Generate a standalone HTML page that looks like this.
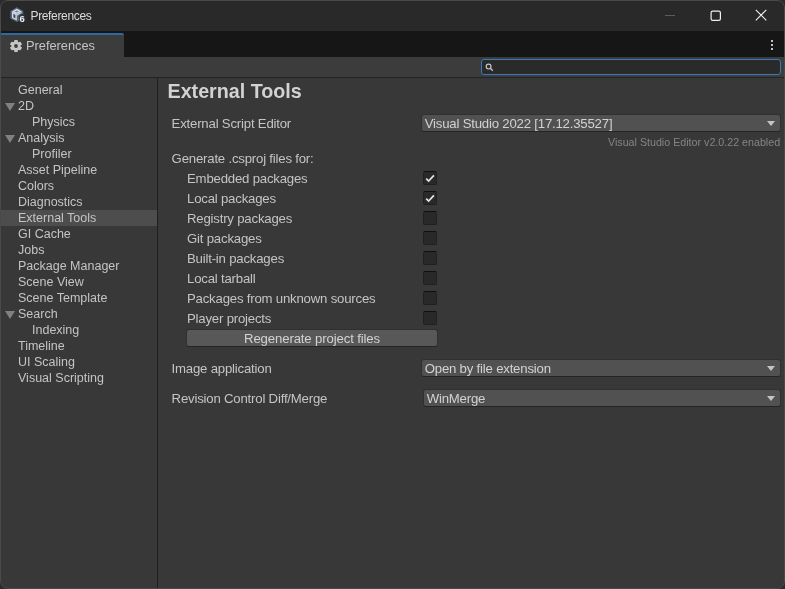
<!DOCTYPE html>
<html><head><meta charset="utf-8">
<style>
*{margin:0;padding:0;box-sizing:border-box}
html,body{width:785px;height:589px;overflow:hidden;background:#2c2c2c;font-family:"Liberation Sans",sans-serif;}
.win{will-change:transform;position:absolute;left:0;top:0;width:785px;height:589px;border:1px solid #4a4a4a;border-radius:8px;background:#383838;overflow:hidden}
.abs{position:absolute}
.title{left:0;top:0;width:783px;height:30px;background:#292929}
.tabbar{left:0;top:30px;width:783px;height:26px;background:#161616}
.tab{left:0;top:32px;width:123px;height:24px;background:#3c3c3c;border-top:2px solid #2e69a2;border-top-right-radius:2px}
.toolbar{left:0;top:56px;width:783px;height:20px;background:#3c3c3c}
.tsep{left:0;top:76px;width:783px;height:1px;background:#232323}
.vsep{left:156px;top:77px;width:1px;height:511px;background:#1f1f1f}
.t{position:absolute;white-space:pre;color:#c4c4c4;font-size:12.7px;line-height:16px}
.rt{font-size:13.2px;letter-spacing:-0.2px}
.lt{font-size:12.5px}
.sel{left:0;top:209px;width:156px;height:16px;background:#4d4d4d}
.tri{position:absolute;width:0;height:0;border-left:5px solid transparent;border-right:5px solid transparent;border-top:8px solid #808080}
.dd{position:absolute;height:18px;background:#515151;border-radius:3px;border:1px solid #303030;border-bottom-color:#242424}
.dd .arr{position:absolute;right:5px;top:6px;width:0;height:0;border-left:4.2px solid transparent;border-right:4.2px solid transparent;border-top:5.2px solid #c4c4c4}
.dd .t{left:2.7px;top:0.5px;color:#d2d2d2}
.cb{position:absolute;left:422px;width:14px;height:14px;background:#292929;border:1px solid #202020;border-top-color:#101010;border-radius:2px}
.cb svg{position:absolute;left:-1px;top:-1px}
.btn{position:absolute;left:185px;top:328px;width:252px;height:18px;background:#585858;border-radius:3px;border:1px solid #303030;border-bottom-color:#242424}
</style></head><body>
<div class="win">
  <div class="abs title"></div>
  <svg class="abs" style="left:9px;top:6px" width="17" height="17" viewBox="0 0 17 17">
    <path d="M6.8 0.2 L13.3 3.9 L13.3 11.4 L6.8 15.1 L0.4 11.4 L0.4 3.9 Z" fill="#5a697a"/>
    <path d="M6.8 1.7 L11.6 4.4 L6.8 7.1 L2 4.4 Z" fill="#d6e0ea"/>
    <path d="M6.8 3.4 L9.1 4.4 L6.8 5.5 L4.5 4.4 Z" fill="#6f7f90"/>
    <path d="M2 4.4 L6.8 7.1 L6.8 13.6 L2 10.9 Z" fill="#d0dae6"/>
    <path d="M3.4 6.7 L5.4 7.9 L5.4 11.4 L3.4 10.2 Z" fill="#3c4653"/>
    <path d="M6.8 7.1 L11.6 4.4 L11.6 6 L6.8 8.7 Z" fill="#c0ccd8"/>
    <ellipse cx="12.2" cy="11.2" rx="3.3" ry="4.3" fill="#2e3640"/>
    <text x="12.2" y="14.8" font-size="9.4" text-anchor="middle" fill="#eeeeee" font-family="Liberation Sans" font-weight="bold">6</text>
  </svg>
  <div class="t" style="left:29.5px;top:6.5px;color:#dcdcdc;font-size:12px;letter-spacing:-0.35px">Preferences</div>
  <div class="abs" style="left:663.5px;top:14px;width:10.5px;height:1px;background:#5c5c5c"></div>
  <svg class="abs" style="left:708.5px;top:8.5px" width="12" height="12" viewBox="0 0 12 12"><rect x="1.1" y="1.1" width="9.3" height="9.3" rx="1.6" fill="none" stroke="#f0f0f0" stroke-width="1.2"/></svg>
  <svg class="abs" style="left:754.3px;top:8.3px" width="13" height="13" viewBox="0 0 13 13"><path d="M0.8 0.8 L11.3 11.3 M11.3 0.8 L0.8 11.3" stroke="#f0f0f0" stroke-width="1.1"/></svg>
  <div class="abs tabbar"></div>
  <div class="abs tab"></div>
  <svg class="abs" style="left:9px;top:39px" width="13" height="13" viewBox="0 0 13 13"><g transform="translate(6 6)" fill="#c6c6c6">
    <circle r="4.5"/><rect x="-1.8" y="-6.1" width="3.6" height="3.2" rx="0.9" transform="rotate(0)"/><rect x="-1.8" y="-6.1" width="3.6" height="3.2" rx="0.9" transform="rotate(60)"/><rect x="-1.8" y="-6.1" width="3.6" height="3.2" rx="0.9" transform="rotate(120)"/><rect x="-1.8" y="-6.1" width="3.6" height="3.2" rx="0.9" transform="rotate(180)"/><rect x="-1.8" y="-6.1" width="3.6" height="3.2" rx="0.9" transform="rotate(240)"/><rect x="-1.8" y="-6.1" width="3.6" height="3.2" rx="0.9" transform="rotate(300)"/>
    <circle r="1.9" fill="#3c3c3c"/></g></svg>
  <div class="t" style="left:25px;top:37px;font-size:12.8px">Preferences</div>
  <div class="abs" style="left:770px;top:39px;width:2px;height:2px;background:#c4c4c4"></div>
  <div class="abs" style="left:770px;top:43px;width:2px;height:2px;background:#c4c4c4"></div>
  <div class="abs" style="left:770px;top:46.5px;width:2px;height:2px;background:#c4c4c4"></div>
  <div class="abs toolbar"></div>
  <div class="abs" style="left:480px;top:58px;width:300px;height:16px;background:#2a2a2a;border:1px solid #3a79bb;border-radius:3px"></div>
  <svg class="abs" style="left:484px;top:62.3px" width="9" height="9" viewBox="0 0 9 9"><circle cx="3.6" cy="3.6" r="2.4" fill="none" stroke="#c4c4c4" stroke-width="1.2"/><path d="M5.3 5.3 L7.8 7.8" stroke="#c4c4c4" stroke-width="1.3"/></svg>
  <div class="abs tsep"></div>
  <div class="abs sel"></div>
<div class="t lt" style="left:17px;top:81px">General</div>
<div class="t lt" style="left:17px;top:97px">2D</div>
<div class="tri" style="left:3.7px;top:102px"></div>
<div class="t lt" style="left:31px;top:113px">Physics</div>
<div class="t lt" style="left:17px;top:129px">Analysis</div>
<div class="tri" style="left:3.7px;top:134px"></div>
<div class="t lt" style="left:31px;top:145px">Profiler</div>
<div class="t lt" style="left:17px;top:161px">Asset Pipeline</div>
<div class="t lt" style="left:17px;top:177px">Colors</div>
<div class="t lt" style="left:17px;top:193px">Diagnostics</div>
<div class="t lt" style="left:17px;top:209px">External Tools</div>
<div class="t lt" style="left:17px;top:225px">GI Cache</div>
<div class="t lt" style="left:17px;top:241px">Jobs</div>
<div class="t lt" style="left:17px;top:257px">Package Manager</div>
<div class="t lt" style="left:17px;top:273px">Scene View</div>
<div class="t lt" style="left:17px;top:289px">Scene Template</div>
<div class="t lt" style="left:17px;top:305px">Search</div>
<div class="tri" style="left:3.7px;top:310px"></div>
<div class="t lt" style="left:31px;top:321px">Indexing</div>
<div class="t lt" style="left:17px;top:337px">Timeline</div>
<div class="t lt" style="left:17px;top:353px">UI Scaling</div>
<div class="t lt" style="left:17px;top:369px">Visual Scripting</div>
  <div class="abs vsep"></div>
  <div class="t" style="left:166.5px;top:80.3px;font-size:19.7px;font-weight:bold;color:#d2d2d2;line-height:20px">External Tools</div>
  <div class="t rt" style="left:170.6px;top:115.43px">External Script Editor</div>
  <div class="dd" style="left:420px;top:113px;width:360px"><div class="t rt">Visual Studio 2022 [17.12.35527]</div><div class="arr"></div></div>
  <div class="t" style="left:607px;top:132.9px;font-size:10.7px;color:#858585">Visual Studio Editor v2.0.22 enabled</div>
  <div class="t rt" style="left:170.6px;top:150.43px">Generate .csproj files for:</div>
<div class="t rt" style="left:186px;top:170.43px">Embedded packages</div>
<div class="cb" style="top:170px"><svg width="14" height="14" viewBox="0 0 14 14"><path d="M3.2 7.7 L5.6 10.1 L10.9 4.4" fill="none" stroke="#e4e4e4" stroke-width="1.7"/></svg></div>
<div class="t rt" style="left:186px;top:190.43px">Local packages</div>
<div class="cb" style="top:190px"><svg width="14" height="14" viewBox="0 0 14 14"><path d="M3.2 7.7 L5.6 10.1 L10.9 4.4" fill="none" stroke="#e4e4e4" stroke-width="1.7"/></svg></div>
<div class="t rt" style="left:186px;top:210.43px">Registry packages</div>
<div class="cb" style="top:210px"></div>
<div class="t rt" style="left:186px;top:230.43px">Git packages</div>
<div class="cb" style="top:230px"></div>
<div class="t rt" style="left:186px;top:250.43px">Built-in packages</div>
<div class="cb" style="top:250px"></div>
<div class="t rt" style="left:186px;top:270.43px">Local tarball</div>
<div class="cb" style="top:270px"></div>
<div class="t rt" style="left:186px;top:290.43px">Packages from unknown sources</div>
<div class="cb" style="top:290px"></div>
<div class="t rt" style="left:186px;top:310.43px">Player projects</div>
<div class="cb" style="top:310px"></div>
  <div class="btn"><div class="t rt" style="left:0;width:250px;text-align:center;top:1px;color:#d2d2d2;letter-spacing:-0.14px">Regenerate project files</div></div>
  <div class="t rt" style="left:170.6px;top:360.43px">Image application</div>
  <div class="dd" style="left:420px;top:358px;width:360px"><div class="t rt">Open by file extension</div><div class="arr"></div></div>
  <div class="t rt" style="left:170.6px;top:390.43px">Revision Control Diff/Merge</div>
  <div class="dd" style="left:422px;top:388px;width:358px"><div class="t rt">WinMerge</div><div class="arr"></div></div>
</div>
</body></html>
